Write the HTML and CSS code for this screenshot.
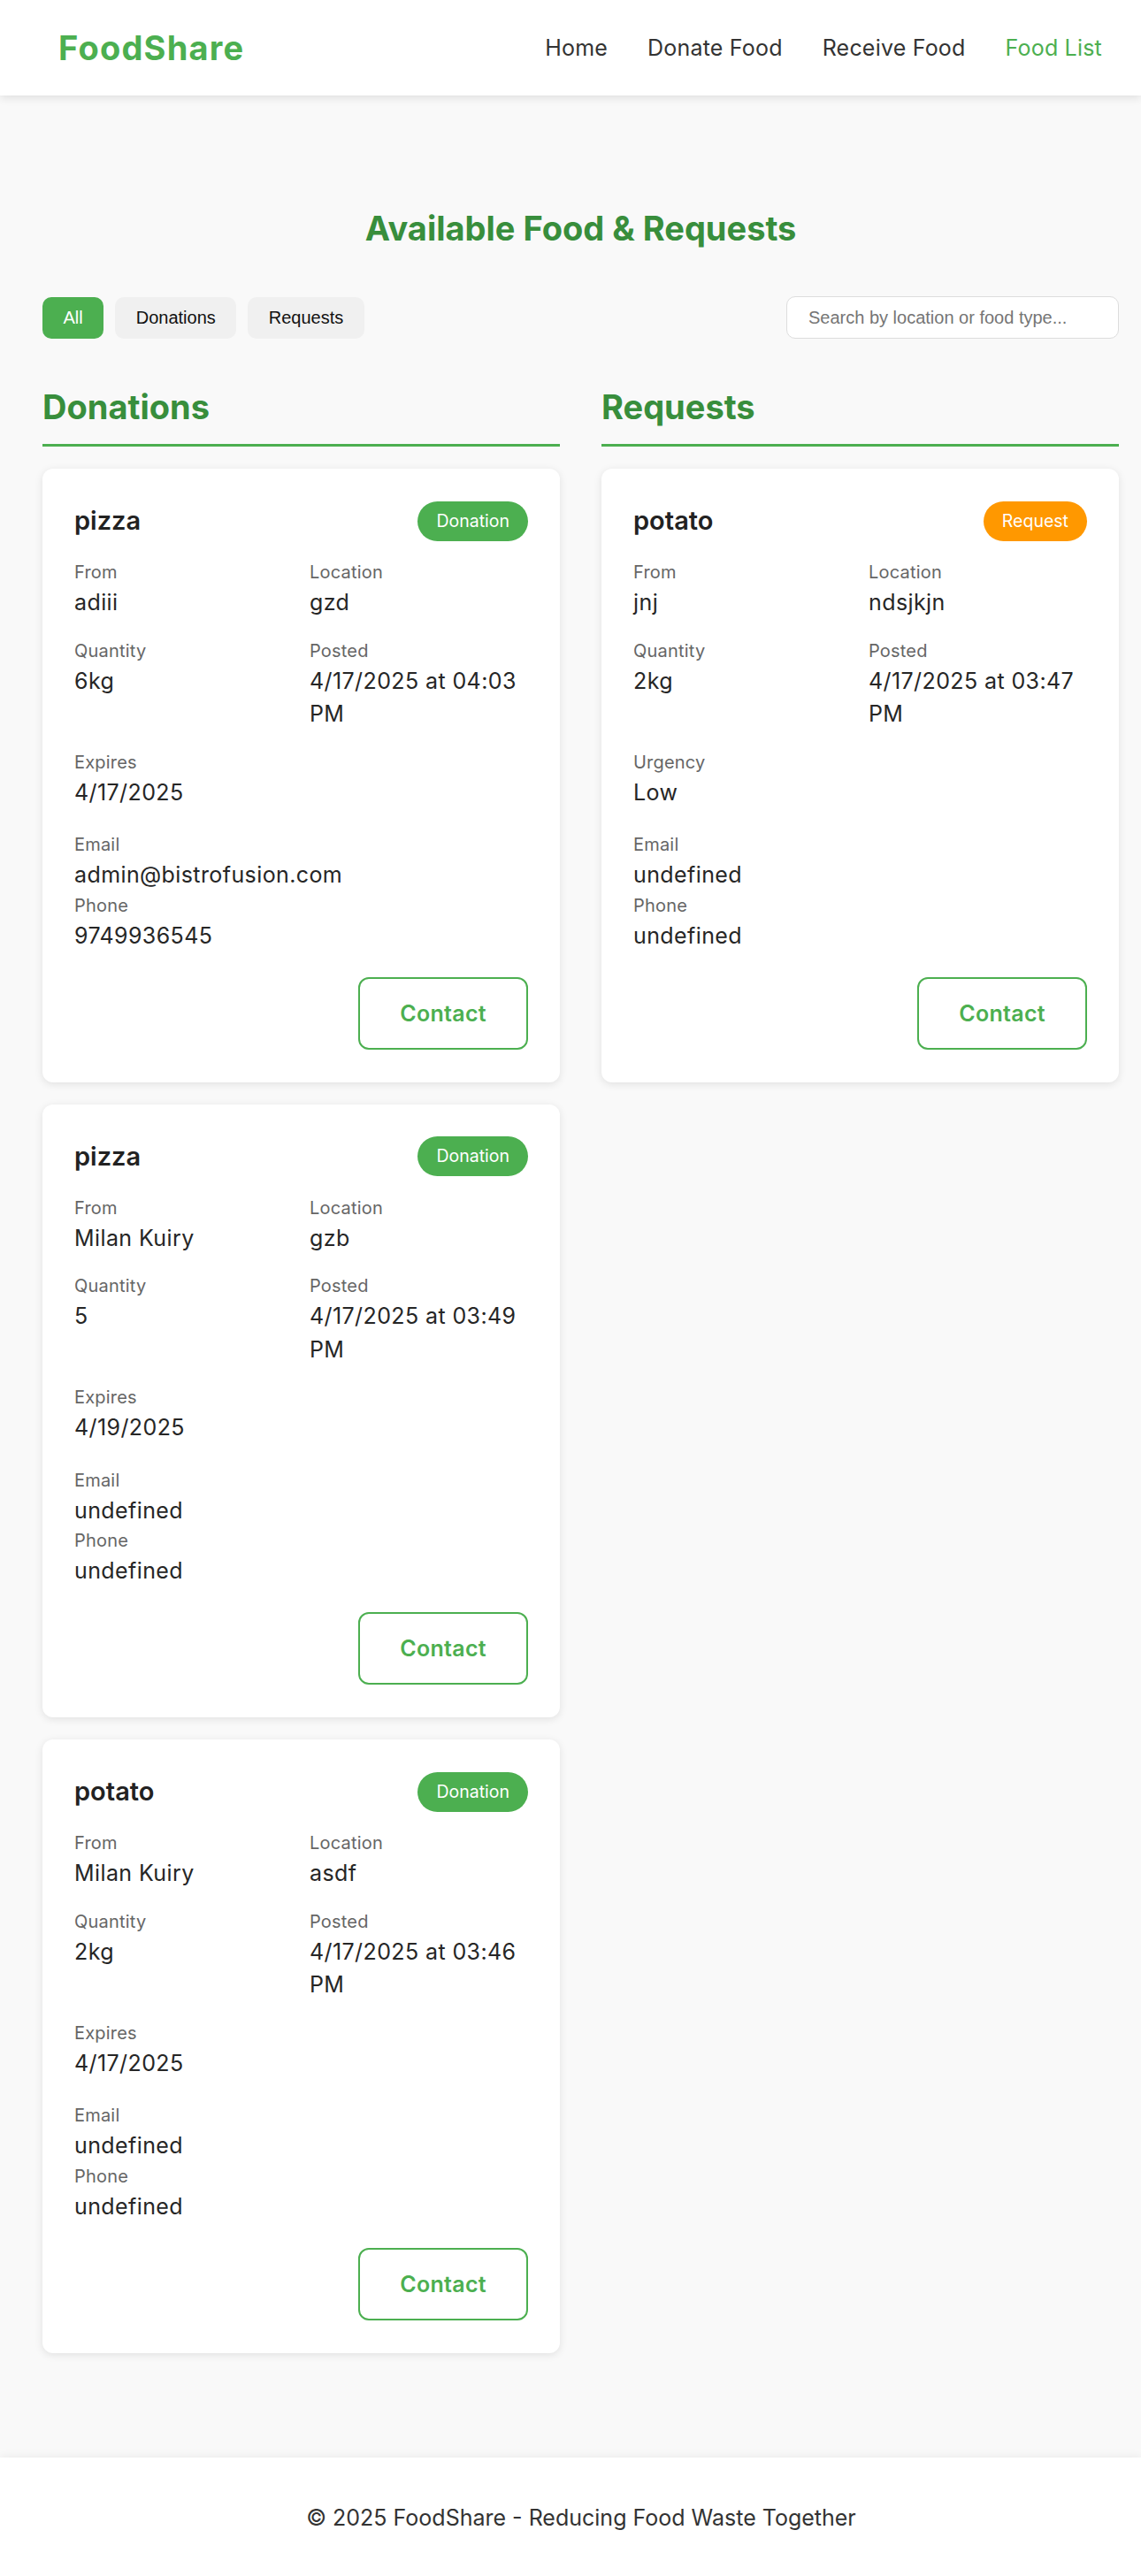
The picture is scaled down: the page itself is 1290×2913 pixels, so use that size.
FILE: index.html
```html
<!DOCTYPE html>
<html lang="en">
<head>
<meta charset="utf-8">
<title>FoodShare - Food List</title>
<link rel="stylesheet" href="styles.css">
</head>
<body>
<header class="site-header">
  <div class="logo">FoodShare</div>
  <nav class="nav">
    <a class="nav-link" href="#">Home</a>
    <a class="nav-link" href="#">Donate Food</a>
    <a class="nav-link" href="#">Receive Food</a>
    <a class="nav-link active" href="#">Food List</a>
  </nav>
</header>

<main class="main">
  <h1 class="page-title">Available Food &amp; Requests</h1>

  <div class="toolbar">
    <div class="filters">
      <button class="filter-btn active">All</button>
      <button class="filter-btn">Donations</button>
      <button class="filter-btn">Requests</button>
    </div>
    <input class="search" type="text" placeholder="Search by location or food type...">
  </div>

  <div class="columns">
    <section class="column">
      <h2 class="column-title">Donations</h2>
      <div class="card-list">
        <article class="card">
          <div class="card-head">
            <h3 class="card-title">pizza</h3>
            <span class="badge badge-donation">Donation</span>
          </div>
          <div class="details">
            <div class="field"><div class="label">From</div><div class="value">adiii</div></div>
            <div class="field"><div class="label">Location</div><div class="value">gzd</div></div>
            <div class="field"><div class="label">Quantity</div><div class="value">6kg</div></div>
            <div class="field"><div class="label">Posted</div><div class="value">4/17/2025 at 04:03 PM</div></div>
            <div class="field"><div class="label">Expires</div><div class="value">4/17/2025</div></div>
          </div>
          <div class="contact-info">
            <div class="label">Email</div><div class="value">admin@bistrofusion.com</div>
            <div class="label">Phone</div><div class="value">9749936545</div>
          </div>
          <div class="actions"><button class="contact-btn">Contact</button></div>
        </article>

        <article class="card">
          <div class="card-head">
            <h3 class="card-title">pizza</h3>
            <span class="badge badge-donation">Donation</span>
          </div>
          <div class="details">
            <div class="field"><div class="label">From</div><div class="value">Milan Kuiry</div></div>
            <div class="field"><div class="label">Location</div><div class="value">gzb</div></div>
            <div class="field"><div class="label">Quantity</div><div class="value">5</div></div>
            <div class="field"><div class="label">Posted</div><div class="value">4/17/2025 at 03:49 PM</div></div>
            <div class="field"><div class="label">Expires</div><div class="value">4/19/2025</div></div>
          </div>
          <div class="contact-info">
            <div class="label">Email</div><div class="value">undefined</div>
            <div class="label">Phone</div><div class="value">undefined</div>
          </div>
          <div class="actions"><button class="contact-btn">Contact</button></div>
        </article>

        <article class="card">
          <div class="card-head">
            <h3 class="card-title">potato</h3>
            <span class="badge badge-donation">Donation</span>
          </div>
          <div class="details">
            <div class="field"><div class="label">From</div><div class="value">Milan Kuiry</div></div>
            <div class="field"><div class="label">Location</div><div class="value">asdf</div></div>
            <div class="field"><div class="label">Quantity</div><div class="value">2kg</div></div>
            <div class="field"><div class="label">Posted</div><div class="value">4/17/2025 at 03:46 PM</div></div>
            <div class="field"><div class="label">Expires</div><div class="value">4/17/2025</div></div>
          </div>
          <div class="contact-info">
            <div class="label">Email</div><div class="value">undefined</div>
            <div class="label">Phone</div><div class="value">undefined</div>
          </div>
          <div class="actions"><button class="contact-btn">Contact</button></div>
        </article>
      </div>
    </section>

    <section class="column">
      <h2 class="column-title">Requests</h2>
      <div class="card-list">
        <article class="card">
          <div class="card-head">
            <h3 class="card-title">potato</h3>
            <span class="badge badge-request">Request</span>
          </div>
          <div class="details">
            <div class="field"><div class="label">From</div><div class="value">jnj</div></div>
            <div class="field"><div class="label">Location</div><div class="value">ndsjkjn</div></div>
            <div class="field"><div class="label">Quantity</div><div class="value">2kg</div></div>
            <div class="field"><div class="label">Posted</div><div class="value">4/17/2025 at 03:47 PM</div></div>
            <div class="field"><div class="label">Urgency</div><div class="value">Low</div></div>
          </div>
          <div class="contact-info">
            <div class="label">Email</div><div class="value">undefined</div>
            <div class="label">Phone</div><div class="value">undefined</div>
          </div>
          <div class="actions"><button class="contact-btn">Contact</button></div>
        </article>
      </div>
    </section>
  </div>
</main>

<footer class="site-footer">
  <p class="footer-text">&copy; 2025 FoodShare - Reducing Food Waste Together</p>
</footer>
</body>
</html>
```

FILE: styles.css
```css
* {
  box-sizing: border-box;
}

body {
  margin: 0;
  background: #f9f9f9;
  font-family: "Inter", "Open Sans", sans-serif;
  color: #333;
}

/* Header */
.site-header {
  height: 108px;
  background: #fff;
  box-shadow: 0 2px 10px rgba(0, 0, 0, 0.12);
  display: flex;
  align-items: center;
  justify-content: space-between;
  padding: 0 44px 0 66px;
  position: relative;
  z-index: 1;
}

.logo {
  font-size: 38px;
  font-weight: 700;
  letter-spacing: 1.2px;
  color: #4caf50;
  line-height: 44px;
}

.nav {
  display: flex;
  gap: 45px;
}

.nav-link {
  font-size: 25px;
  letter-spacing: 0.2px;
  line-height: 38px;
  color: #333;
  text-decoration: none;
}

.nav-link.active {
  color: #4caf50;
}

/* Main */
.main {
  padding: 128px 25px 118px 48px;
}

.page-title {
  margin: 0 0 55px;
  text-align: center;
  font-size: 38px;
  line-height: 44px;
  font-weight: 700;
  color: #388e3c;
}

.toolbar {
  height: 48px;
  display: flex;
  align-items: center;
  justify-content: space-between;
  margin-bottom: 55px;
}

.filters {
  display: flex;
  gap: 13px;
}

.filter-btn {
  border: none;
  border-radius: 10px;
  padding: 12px 23.5px;
  font-family: "Liberation Sans", Arial, sans-serif;
  font-size: 20px;
  line-height: 23px;
  background: #f0f0f0;
  color: #111;
}

.filter-btn.active {
  background: #4caf50;
  color: #fff;
}

.search {
  width: 376px;
  height: 48px;
  border: 1px solid #ddd;
  border-radius: 10px;
  padding: 0 24px;
  font-family: "Liberation Sans", Arial, sans-serif;
  font-size: 20px;
  background: #fff;
  color: #333;
}

.search::placeholder {
  color: #757575;
}

.columns {
  display: grid;
  grid-template-columns: 1fr 1fr;
  column-gap: 47px;
  align-items: start;
}

.column-title {
  margin: 0 0 25px;
  padding-bottom: 20px;
  border-bottom: 3px solid #4caf50;
  font-size: 38px;
  line-height: 44px;
  font-weight: 700;
  color: #388e3c;
}

.card-list {
  display: flex;
  flex-direction: column;
  gap: 25px;
}

/* Card */
.card {
  background: #fff;
  border-radius: 12px;
  box-shadow: 0 2px 10px rgba(0, 0, 0, 0.1);
  padding: 36px 36px 37px;
}

.card-head {
  height: 46px;
  display: flex;
  align-items: center;
  justify-content: space-between;
  margin-bottom: 20px;
}

.card-title {
  margin: 0;
  font-size: 29px;
  line-height: 46px;
  font-weight: 600;
  color: #222;
}

.badge {
  display: inline-block;
  height: 45px;
  padding: 0 21px;
  border-radius: 23px;
  font-size: 19.5px;
  line-height: 45px;
  color: #fff;
}

.badge-donation {
  background: #4caf50;
}

.badge-request {
  background: #ff9800;
}

.details {
  display: grid;
  grid-template-columns: 1fr 1fr;
  column-gap: 19px;
  row-gap: 20px;
}

.label {
  font-size: 20px;
  letter-spacing: 0.2px;
  line-height: 30px;
  color: #666;
  margin-bottom: 1px;
}

.value {
  font-size: 25px;
  letter-spacing: 0.4px;
  line-height: 37.5px;
  color: #262626;
}

.contact-info {
  margin-top: 25px;
}

.actions {
  margin-top: 27.5px;
  display: flex;
  justify-content: flex-end;
}

.contact-btn {
  height: 82px;
  padding: 0 45px;
  border: 2px solid #4caf50;
  border-radius: 12px;
  background: #fff;
  font-family: "Inter", "Open Sans", sans-serif;
  font-size: 25px;
  letter-spacing: 0.3px;
  font-weight: 600;
  color: #4caf50;
}

/* Footer */
.site-footer {
  background: #fff;
  box-shadow: 0 -2px 10px rgba(0, 0, 0, 0.06);
  padding: 49px 0 48px 24px;
}

.footer-text {
  margin: 0;
  text-align: center;
  font-size: 25px;
  line-height: 38px;
  color: #333;
}
```
